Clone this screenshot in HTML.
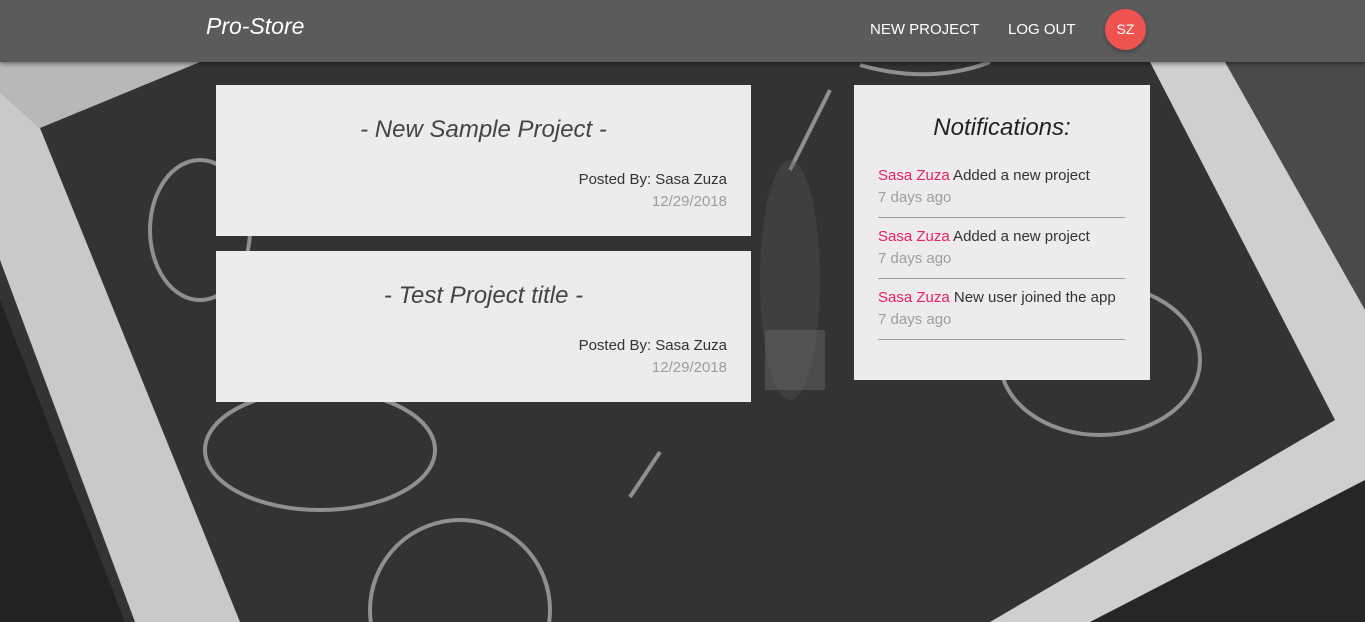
<!DOCTYPE html>
<html><head><meta charset="utf-8"><style>
*{margin:0;padding:0;box-sizing:border-box}
html{overflow:hidden;width:1365px;height:622px}
body{width:1365px;height:622px;overflow:hidden;font-family:"Liberation Sans",sans-serif;background:#2c2c2e;position:relative}
svg.bg{position:absolute;left:0;top:0;display:block}
.nav{position:absolute;left:0;top:0;width:1365px;height:62px;background:#5b5b5b;box-shadow:0 2px 4px rgba(0,0,0,.4);color:#fff}
.logo{position:absolute;left:206px;top:13px;font-size:23px;font-style:italic}
.lnk{position:absolute;top:21px;font-size:15px}
.av{position:absolute;left:1105px;top:9px;width:41px;height:41px;border-radius:50%;background:#ef5350;font-size:14px;text-align:center;line-height:41px;box-shadow:0 2px 4px rgba(0,0,0,.3)}
.card{position:absolute;left:216px;width:535px;height:151px;background:#edebeb}
.card h2{position:absolute;left:0;width:100%;top:31px;text-align:center;font-weight:normal;font-style:italic;font-size:24px;color:#444}
.card .p{position:absolute;right:24px;top:86px;font-size:15px;color:#333}
.card .d{position:absolute;right:24px;top:108px;font-size:15px;color:#9e9e9e}
.nt{position:absolute;left:854px;top:85px;width:296px;height:295px;background:#edebeb}
.nt h3{position:absolute;top:29px;width:100%;text-align:center;font-weight:normal;font-style:italic;font-size:24px;color:#222}
.it{position:absolute;left:24px;width:247px;height:51px;border-bottom:1px solid #9e9e9e;font-size:15px;color:#333}
.it span{color:#e91e63}
.it .g{color:#9e9e9e;margin-top:5px}
</style></head><body>
<svg class="bg" width="1365" height="622">
<rect width="1365" height="622" fill="#333335"/>
<polygon points="1225,62 1365,62 1365,330" fill="#4a4a48"/>
<polygon points="1090,622 1365,480 1365,622" fill="#262626"/>
<polygon points="0,300 125,622 0,622" fill="#222"/>
<polygon points="0,62 200,62 40,128 0,92" fill="#b8b8b6"/>
<polygon points="0,92 40,128 240,622 135,622 0,260" fill="#c9c9c7"/>
<polygon points="1150,62 1225,62 1365,310 1365,480 1090,622 990,622 1335,420" fill="#cfcfcd"/>
<g fill="none" stroke="#cfcfcf" stroke-width="4" opacity=".6">
<ellipse cx="320" cy="450" rx="115" ry="60"/>
<ellipse cx="460" cy="610" rx="90" ry="90"/>
<ellipse cx="1100" cy="360" rx="100" ry="75"/>
<ellipse cx="200" cy="230" rx="50" ry="70"/>
<path d="M660,452 L630,497"/><path d="M830,90 L790,170"/>
<path d="M860,65 Q930,85 990,62"/>
</g>
<ellipse cx="790" cy="280" rx="30" ry="120" fill="#555" opacity=".35"/>
<rect x="765" y="330" width="60" height="60" fill="#666" opacity=".5"/>
</svg>
<div class="nav">
<div class="logo">Pro-Store</div>
<div class="lnk" style="left:870px">NEW PROJECT</div>
<div class="lnk" style="left:1008px">LOG OUT</div>
<div class="av">SZ</div>
</div>
<div class="card" style="top:85px"><h2>- New Sample Project -</h2><div class="p">Posted By: Sasa Zuza</div><div class="d">12/29/2018</div></div>
<div class="card" style="top:251px"><h2>- Test Project title -</h2><div class="p">Posted By: Sasa Zuza</div><div class="d">12/29/2018</div></div>
<div class="nt"><h3>Notifications:</h3>
<div class="it" style="top:82px"><span>Sasa Zuza</span> Added a new project<div class="g">7 days ago</div></div>
<div class="it" style="top:143px"><span>Sasa Zuza</span> Added a new project<div class="g">7 days ago</div></div>
<div class="it" style="top:204px"><span>Sasa Zuza</span> New user joined the app<div class="g">7 days ago</div></div>
</div>
</body></html>
